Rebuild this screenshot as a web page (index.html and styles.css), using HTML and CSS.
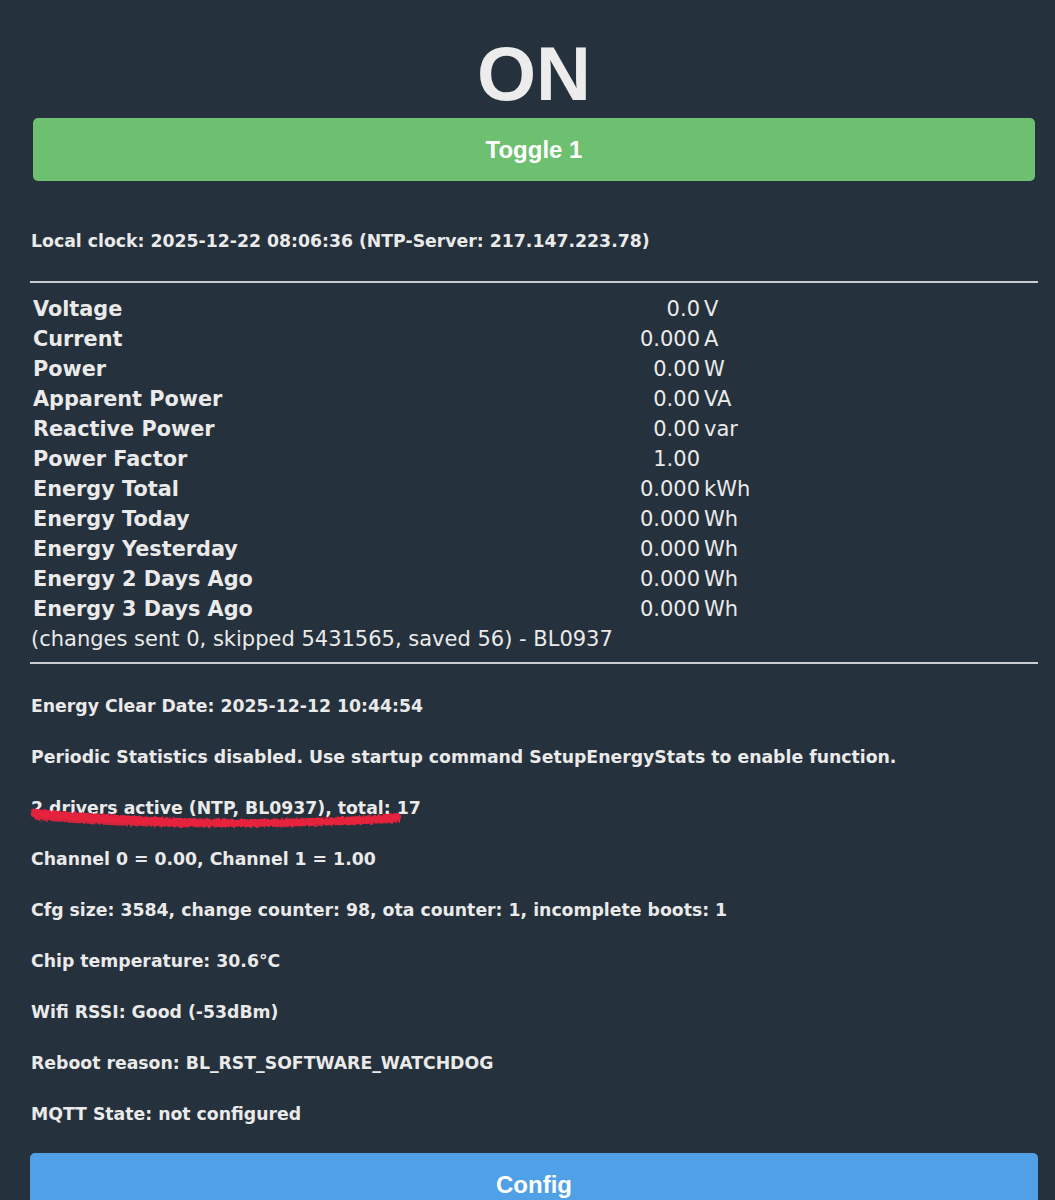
FILE: index.html
```html
<!DOCTYPE html>
<html>
<head>
<meta charset="utf-8">
<link rel="stylesheet" href="styles.css">
</head>
<body>
<main class="page">
  <h1 class="state">ON</h1>
  <button class="btn btn-toggle">Toggle 1</button>
  <p class="info clock">Local clock: 2025-12-22 08:06:36 (NTP-Server: 217.147.223.78)</p>
  <hr class="rule rule-top">
  <div class="readings">
    <div class="label">Voltage</div><div class="value">0.0</div><div class="unit">V</div>
    <div class="label">Current</div><div class="value">0.000</div><div class="unit">A</div>
    <div class="label">Power</div><div class="value">0.00</div><div class="unit">W</div>
    <div class="label">Apparent Power</div><div class="value">0.00</div><div class="unit">VA</div>
    <div class="label">Reactive Power</div><div class="value">0.00</div><div class="unit">var</div>
    <div class="label">Power Factor</div><div class="value">1.00</div><div class="unit"></div>
    <div class="label">Energy Total</div><div class="value">0.000</div><div class="unit">kWh</div>
    <div class="label">Energy Today</div><div class="value">0.000</div><div class="unit">Wh</div>
    <div class="label">Energy Yesterday</div><div class="value">0.000</div><div class="unit">Wh</div>
    <div class="label">Energy 2 Days Ago</div><div class="value">0.000</div><div class="unit">Wh</div>
    <div class="label">Energy 3 Days Ago</div><div class="value">0.000</div><div class="unit">Wh</div>
  </div>
  <div class="changes">(changes sent 0, skipped 5431565, saved 56) - BL0937</div>
  <hr class="rule rule-bottom">
  <p class="info first">Energy Clear Date: 2025-12-12 10:44:54</p>
  <p class="info">Periodic Statistics disabled. Use startup command SetupEnergyStats to enable function.</p>
  <p class="info marked">2 drivers active (NTP, BL0937), total: 17<svg class="scribble" width="380" height="28" viewBox="0 0 380 28" aria-hidden="true"><defs><filter id="rough" x="-5%" y="-50%" width="110%" height="200%"><feTurbulence type="fractalNoise" baseFrequency="0.4" numOctaves="2" seed="4"/><feDisplacementMap in="SourceGraphic" scale="4"/></filter></defs><g filter="url(#rough)" fill="none" stroke="#e5223d" stroke-linecap="round"><path d="M3 7 C 40 10, 90 14, 150 16 S 260 17, 310 15 S 355 11, 366 11" stroke-width="8"/><path d="M6 11 C 60 16, 120 19, 190 18 S 300 16, 365 14" stroke-width="6" opacity="0.9"/></g></svg></p>
  <p class="info">Channel 0 = 0.00, Channel 1 = 1.00</p>
  <p class="info">Cfg size: 3584, change counter: 98, ota counter: 1, incomplete boots: 1</p>
  <p class="info">Chip temperature: 30.6°C</p>
  <p class="info">Wifi RSSI: Good (-53dBm)</p>
  <p class="info">Reboot reason: BL_RST_SOFTWARE_WATCHDOG</p>
  <p class="info">MQTT State: not configured</p>
  <button class="btn btn-config">Config</button>
</main>
</body>
</html>
```

FILE: styles.css
```css
html, body {
  margin: 0;
  padding: 0;
  background: #25313c;
}
body {
  color: #eaeaea;
  font-family: "DejaVu Sans", Verdana, sans-serif;
}
.page {
  padding: 0 17px 0 30px;
  display: flex;
  flex-direction: column;
}
.state {
  margin: 38px 0 0;
  font-family: "Liberation Sans", Arial, sans-serif;
  font-weight: bold;
  font-size: 76px;
  line-height: 72px;
  height: 72px;
  text-align: center;
  color: #ececec;
}
.btn {
  display: block;
  border: none;
  border-radius: 5px;
  color: #ffffff;
  font-family: "Liberation Sans", Arial, sans-serif;
  font-weight: bold;
  font-size: 24px;
  height: 63px;
  padding: 0;
  cursor: pointer;
}
.btn-toggle {
  margin: 8px 3px 0 3px;
  background: #6cc070;
}
.btn-config {
  margin-top: -2px;
  background: #4fa0e6;
  width: 100%;
}
.info {
  font-size: 17.3px;
  line-height: 20px;
  font-weight: bold;
  margin: 0 0 31px 1px;
  white-space: nowrap;
}
.clock {
  margin: 50px 0 0 1px;
}
.rule {
  border: none;
  border-top: 2px solid #c9cdd1;
  margin: 0;
  height: 0;
}
.rule-top {
  margin-top: 30px;
}
.rule-bottom {
  margin-top: 8px;
  margin-bottom: 32px;
}
.readings {
  margin-top: 11px;
  display: grid;
  grid-template-columns: 1fr 100px 334px;
  column-gap: 4px;
  font-size: 21px;
  line-height: 30px;
}
.label {
  font-weight: bold;
  font-size: 20.8px;
  padding-left: 3px;
}
.value {
  text-align: right;
}
.changes {
  font-size: 21px;
  line-height: 30px;
  padding-left: 1px;
}
.marked {
  position: relative;
}
.scribble {
  position: absolute;
  left: 0;
  top: 8px;
}
```
